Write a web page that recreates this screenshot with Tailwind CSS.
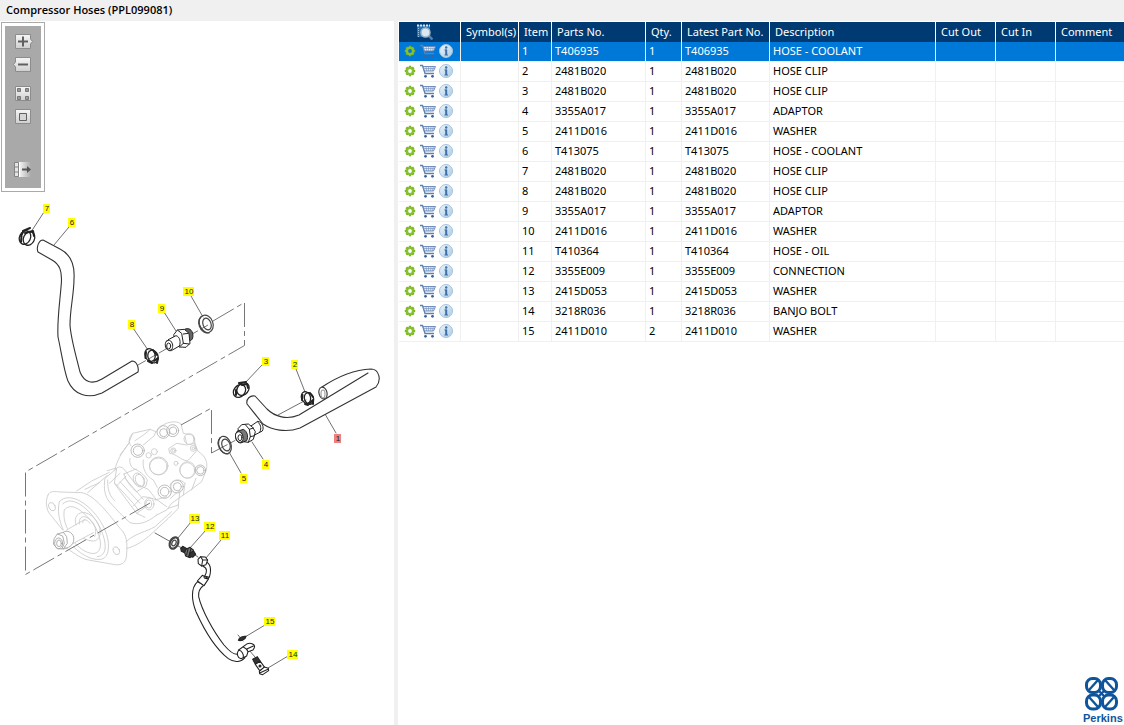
<!DOCTYPE html>
<html lang="en">
<head>
    <meta charset="UTF-8">
    <meta name="viewport" content="width=device-width, initial-scale=1.0">
    <title>Compressor Hoses (PPL099081)</title>
    <script src="https://cdn.jsdelivr.net/npm/@tailwindcss/browser@4"></script>
</head>
<body class="min-h-screen flex flex-col bg-white text-black text-[11px] font-['Noto_Sans','Open_Sans',sans-serif]">

    <!-- Shared icons -->
    <svg class="absolute w-0 h-0" aria-hidden="true">
        <defs>
            <linearGradient id="btnFill" x1="0" y1="0" x2="0" y2="1">
                <stop offset="0" stop-color="#f6f6f6"/>
                <stop offset="1" stop-color="#cfcfcf"/>
            </linearGradient>
            <linearGradient id="fadeFill" x1="0" y1="0" x2="1" y2="0">
                <stop offset="0" stop-color="#f0f0f0"/>
                <stop offset="1" stop-color="#a9a9a9"/>
            </linearGradient>
            <linearGradient id="infoFill" x1="0" y1="0" x2="1" y2="1">
                <stop offset="0" stop-color="#eef5fb"/>
                <stop offset="1" stop-color="#a9cbe6"/>
            </linearGradient>
        </defs>
        <symbol id="gear" viewBox="0 0 12 12">
            <path d="M6 .8v10.400M.8 6h10.400M2.300 2.300l7.400 7.400M9.700 2.300l-7.400 7.400" stroke="#79b51c" stroke-width="2.400"/>
            <circle cx="6" cy="6" r="3" fill="none" stroke="#86bf2f" stroke-width="2.400"/>
            <circle cx="6" cy="6" r="1.900" fill="currentColor"/>
        </symbol>
        <symbol id="cart" viewBox="0 0 16 14">
            <path d="M0 1.500h2.500L5 9.500h9" fill="none" stroke="#5b80b2" stroke-width="1.300"/>
            <path d="M3 2.500h12.500l-2 4.500H4.500z" fill="#e4ecf6" stroke="#6285b5" stroke-width=".9"/>
            <path d="M3.500 4.500h11.500M6 2.500l.8 4.500M8.500 2.500v4.500M11 2.500l-.4 4.500M13.400 2.500l-1 4.500" stroke="#7391bb" stroke-width=".6" fill="none"/>
            <circle cx="5.500" cy="12.300" r="1.400" fill="#3f6298"/>
            <circle cx="12.500" cy="12.300" r="1.400" fill="#3f6298"/>
        </symbol>
        <symbol id="info" viewBox="0 0 14 14">
            <circle cx="7" cy="7" r="6.500" fill="url(#infoFill)" stroke="#a3c3df"/>
            <path d="M7.200 5.500v5.500" fill="none" stroke="#3f6fa5" stroke-width="2"/>
            <path d="M5.500 6h2M5.500 11h3.500" fill="none" stroke="#3f6fa5" stroke-width="1"/>
            <circle cx="7.200" cy="3.500" r="1.200" fill="#3f6fa5"/>
        </symbol>
    </svg>

    <header class="h-[21px] shrink-0 bg-[#f0f0f0] px-1.5 flex items-center">
        <h1 class="font-semibold font-['Open_Sans','Noto_Sans',sans-serif]">Compressor Hoses (PPL099081)</h1>
    </header>

    <main class="flex-1 flex">
        <!-- Exploded view -->
        <section class="relative w-[398px] shrink-0 border-r-4 border-[#f0f0f0]">
            <svg class="block w-full" viewBox="0 21 394 704" fill="none" stroke-linejoin="round" stroke-linecap="round">
                <!-- Pump body -->
                <g transform="translate(20 400) scale(.33333)" stroke="#cbcbcb" stroke-width="2.600">
                    <path d="M84 285C88 272 105 274 120 276L185 278C225 285 268 345 300 385C322 405 322 430 320 462C320 485 308 497 285 494L205 480C180 476 150 450 133 440M84 285C76 300 78 325 88 340L128 390"/>
                    <path d="M118 305C150 270 215 315 248 375C275 425 270 480 238 478C220 480 190 470 160 440M118 305C112 330 116 360 130 390"/>
                    <path d="M128 312C155 283 210 325 240 382C262 430 262 468 232 470M133 330C155 300 200 340 228 385C248 425 245 455 225 460C205 463 185 450 165 430M133 330C130 345 132 365 142 385"/>
                    <path d="M168 375C160 350 175 335 195 338C225 345 245 380 240 405C232 430 212 425 190 415M178 372C176 355 185 346 200 352C225 365 232 390 224 410M188 368C188 358 200 355 210 370"/>
                    <ellipse cx="96" cy="320" rx="9" ry="13" transform="rotate(-25 96 320)"/>
                    <ellipse cx="289" cy="452" rx="9" ry="12" transform="rotate(-25 289 452)"/>
                    <path d="M140 390L195 358M160 430L220 398M170 273L215 243L268 217M195 268L238 248M203 278L262 226M262 212L285 205"/>
                    <path d="M320 445C345 440 365 425 385 410L445 355L475 325V312M318 425C345 400 380 395 405 380L455 335"/>
                    <!-- end cover -->
                    <path d="M285 210C290 180 305 160 325 132L338 100L390 88L408 95L425 78C440 66 470 60 483 72L490 100L515 105C530 115 520 130 528 148L548 165C562 180 565 200 553 225L545 245L512 270L490 285L455 310L440 330L410 345"/>
                    <path d="M338 100C325 115 325 125 333 138M390 88C380 100 360 112 345 122M408 95L402 108L370 135M300 165L325 132M285 210C290 200 300 198 310 205L345 250L385 268L410 300"/>
                    <path d="M285 210L255 235C250 265 255 290 268 305L300 340L330 368C355 375 380 370 410 345M263 240C262 270 270 290 285 303M268 250L300 220M290 258L318 228M285 250L340 310L355 330M300 245L360 310M315 235L370 298"/>
                    <path d="M290 205L283 250L335 320M335 320L350 340L375 352M340 318L368 290L385 292L412 300L440 320M350 340L378 320"/>
                    <path d="M312 222L345 208C355 212 372 222 382 240L378 258L350 275C335 265 320 245 312 222Z"/>
                    <ellipse cx="356" cy="240" rx="15" ry="22" transform="rotate(-25 356 240)"/>
                    <ellipse cx="360" cy="241" rx="13" ry="19" transform="rotate(-25 360 241)"/>
                    <ellipse cx="388" cy="312" rx="14" ry="18"/>
                    <ellipse cx="386" cy="312" rx="9" ry="12"/>
                    <!-- ports and bolts -->
                    <ellipse cx="416" cy="198" rx="28" ry="27"/>
                    <ellipse cx="415" cy="199" rx="26" ry="25"/>
                    <ellipse cx="503" cy="210" rx="24" ry="25"/>
                    <ellipse cx="502" cy="211" rx="22" ry="23"/>
                    <path d="M447 145L470 130L500 135L525 130L532 150L510 175C495 195 480 165 450 160Z"/>
                    <circle cx="460" cy="152" r="8"/><circle cx="460" cy="152" r="4"/>
                    <circle cx="520" cy="145" r="9"/><circle cx="520" cy="145" r="4"/>
                    <circle cx="386" cy="166" r="8"/><circle cx="403" cy="155" r="9"/><circle cx="468" cy="190" r="6"/>
                    <circle cx="508" cy="117" r="16"/><path d="M495 110L500 130M520 108L522 125"/>
                    <g stroke="#b2b2b2">
                        <circle cx="353" cy="152" r="20"/><circle cx="354" cy="152" r="14"/>
                        <circle cx="430" cy="96" r="19"/><circle cx="431" cy="98" r="12"/>
                        <circle cx="458" cy="92" r="18"/><circle cx="459" cy="92" r="11"/>
                        <circle cx="434" cy="275" r="20"/><circle cx="434" cy="275" r="13"/>
                        <circle cx="471" cy="260" r="19"/><circle cx="472" cy="260" r="12"/>
                        <circle cx="541" cy="211" r="16"/><circle cx="541" cy="211" r="11"/>
                    </g>
                    <path d="M370 180C365 205 380 230 400 240L412 262M450 255C460 235 480 235 495 250M330 175C325 195 340 210 350 208M528 235L515 270M450 296L480 270L475 315L445 325M405 300L440 290M495 250L490 285"/>
                    <!-- shaft nut -->
                    <g stroke="#a3a3a3">
                        <ellipse cx="116" cy="430" rx="12" ry="16"/>
                        <ellipse cx="117" cy="430" rx="7" ry="10"/>
                        <path d="M103 415L112 402L130 397L140 410L142 430L130 447L112 446L101 433Z"/>
                        <path d="M130 397C140 388 158 397 161 412C163 430 155 442 130 447M112 402L128 408L133 430L126 446"/>
                    </g>
                </g>

                <!-- Centre lines -->
                <g stroke="#777" stroke-width="1" stroke-dasharray="24 4 5 4" stroke-linecap="butt">
                    <path d="M213 321L244.500 302.500V345.500L25.500 472V574.500L150 503"/>
                    <path d="M181 425L211.500 408V453L236 440"/>
                    <path d="M138 365L208 325" stroke-dasharray="9 3"/>
                </g>
                <g stroke="#6e6e6e" stroke-width="1">
                    <path d="M278 415L306 400M155 533L171 542M178 546L184 549M192 553L198 557M238 635L243 641M249 650L255 657"/>
                </g>

                <!-- Leaders -->
                <g stroke="#707070" stroke-width="1">
                    <path d="M44 212L31 232M69 227L54 245M133 328L148 350M164 312L176 331M191 296L203 317M262 365L245 383M296 369L305 392M336 433L325 414M263 459L252 442M241 473L229 452M191 522L178 538M206 530L190 548M221 540L206 558M265 625L245 637M288 656L268 668"/>
                </g>

                <!-- Hoses 6 and 1 -->
                <g stroke="#333" stroke-width="1.100" fill="#fff">
                    <path d="M43 240L60 249C70 254 75 264 74 279C74 294 70 309 70 325C71 340 77 359 80 372C84 382 92 385 102 379L132 361C137 361 139 368 138 372L102 393C88 399 74 395 68 381C64 371 61 350 58 337C57 320 60 301 61 287C63 270 59 264 52 260L38 252C36 247 39 240 43 240Z"/>
                    <path d="M322 387C334 379 350 370 371 369C379 369 382 380 376 387L300 428C286 433 272 430 263 424L247 404C246 399 250 395 255 396L267 409C275 417 287 420 299 415L326 399Z" stroke="none"/>
                    <path d="M322 387C334 379 350 370 371 369C379 369 382 380 376 387L300 428C286 433 272 430 263 424L247 404C246 399 250 395 255 396L267 409C275 417 287 420 299 415L368 373" fill="none"/>
                    <ellipse cx="323" cy="393" rx="4" ry="6" transform="rotate(-15 323 393)"/>
                    <ellipse cx="323" cy="394" rx="2" ry="4" stroke="#999"/>
                </g>

                <!-- Hose clips 7, 8, 3, 2 -->
                <g stroke="#222">
                    <g stroke-width="1.300">
                        <ellipse cx="25" cy="237.500" rx="5.500" ry="7" transform="rotate(25 25 237.500)"/>
                        <ellipse cx="29" cy="238.500" rx="5.500" ry="7" transform="rotate(25 29 238.500)"/>
                        <ellipse cx="150" cy="355" rx="5" ry="6.500" transform="rotate(-20 150 355)"/>
                        <ellipse cx="153" cy="356.500" rx="5" ry="6.500" transform="rotate(-20 153 356.500)"/>
                        <ellipse cx="239.500" cy="391" rx="5.500" ry="7" transform="rotate(40 239.500 391)"/>
                        <ellipse cx="243" cy="389" rx="5.500" ry="7" transform="rotate(40 243 389)"/>
                        <ellipse cx="306" cy="397.500" rx="4.500" ry="6" transform="rotate(-20 306 397.500)"/>
                        <ellipse cx="309" cy="398.500" rx="4.500" ry="6" transform="rotate(-20 309 398.500)"/>
                    </g>
                    <path d="M21.500 236L21 242M23 232L21 236M146 352L145.500 358M236 390L236 395M302.500 395L302 400M148 361L152 363M305 404L308 405" stroke-width="2"/>
                    <path d="M23 231L30 228M25 233L33 231L34 236M153 350L157 355M154 361L158 358L157 363M239 383L246 382M242 385L247 384L248 388M310 393L313 397M309 404L313 400V404" stroke-width="2"/>
                </g>

                <!-- Adaptors 9 and 4 -->
                <g stroke="#222" stroke-width="3" fill="#fff" transform="translate(120 270) scale(.33333)">
                    <path d="M192 180C200 172 214 175 218 190C221 205 215 213 207 212L195 210Z" fill="#666"/>
                    <path d="M162 193L172 180L193 178L207 190L210 220L198 232L178 231L166 220Z"/>
                    <path d="M172 180L185 190L190 220L178 231M190 192L205 190M190 220L208 222"/>
                    <path d="M145 209L168 197C180 200 183 217 178 228L154 242C140 245 130 225 145 209Z"/>
                    <ellipse cx="147" cy="226" rx="11" ry="15" transform="rotate(-15 147 226)"/>
                    <ellipse cx="146" cy="228" rx="6" ry="9"/>
                    <path d="M393 468L413 454C427 456 433 472 427 483L400 497Z"/>
                    <path d="M413 456C422 462 425 474 420 485" fill="none"/>
                    <path d="M355 475L365 464L385 462L398 472L406 485L400 508L385 517L370 515L358 500Z"/>
                    <path d="M375 463L388 478L391 500L385 517M388 478L400 474M391 500L404 497"/>
                    <path d="M352 484L370 478C382 484 386 500 380 512L362 519C347 518 341 495 352 484Z" fill="#777"/>
                    <ellipse cx="358" cy="501" rx="11" ry="16" transform="rotate(-15 358 501)"/>
                    <ellipse cx="360" cy="503" rx="6" ry="9"/>
                </g>

                <!-- Washers 10, 5, 13 -->
                <g stroke="#444" stroke-width="1.200">
                    <ellipse cx="206" cy="324" rx="7" ry="9" transform="rotate(-20 206 324)"/>
                    <ellipse cx="207" cy="324" rx="4" ry="6" transform="rotate(-20 207 324)"/>
                    <path d="M201 317C196 322 202 333 209 333"/>
                    <ellipse cx="225" cy="445" rx="6" ry="9" transform="rotate(-20 225 445)"/>
                    <ellipse cx="226" cy="445" rx="4" ry="6" transform="rotate(-20 226 445)"/>
                    <path d="M220 438C215 444 221 454 228 454"/>
                    <ellipse cx="174" cy="543" rx="4" ry="6" stroke-width="2.200" transform="rotate(25 174 543)"/>
                    <ellipse cx="174" cy="543" rx="2" ry="3" transform="rotate(25 174 543)"/>
                </g>

                <!-- Connection 12, oil hose 11, washer 15, banjo bolt 14 -->
                <g stroke="#222" stroke-width="3.200" fill="#fff" transform="translate(130 500) scale(.33333)">
                    <path d="M152 145L158 139L172 147L167 160L154 154Z" fill="#333"/>
                    <path d="M168 148L180 142L190 150L191 164L180 173L167 168L164 158Z" fill="#777"/>
                    <path d="M180 158L191 153L197 163L188 172L178 168Z" fill="#333"/>
                    <path d="M174 147L170 165M183 146L176 170" fill="none"/>
                    <path d="M225 184C245 192 243 215 238 232L224 228C232 215 232 204 219 199Z"/>
                    <path d="M204 178L212 170L226 171L233 180L228 194L215 198L205 191Z"/>
                    <path d="M212 170L218 180L215 198M218 180L232 180" fill="none"/>
                    <path d="M203 245C180 265 186 305 198 335C225 395 262 450 295 476C315 490 335 485 345 473L325 461C315 467 300 456 282 435C250 395 215 330 206 290C204 275 210 264 222 255Z"/>
                    <path d="M202 243L217 226L236 236L222 257Z"/>
                    <path d="M222 231C222 236 232 238 235 233" fill="none"/>
                    <path d="M326 450L352 431C362 427 377 433 373 443L369 450L354 455L350 468L333 476C322 474 319 460 326 450Z"/>
                    <path d="M326 450C335 452 342 462 340 473M340 441C349 445 352 450 354 455M352 446L370 438" fill="none"/>
                    <path d="M325 421C327 413 341 407 348 409C347 417 334 424 325 421Z" fill="#333"/>
                    <path d="M368 478L382 470L391 484L376 493Z" fill="#333"/>
                    <path d="M376 493L391 484L404 502L389 512Z"/>
                    <path d="M388 514L403 501L415 505L416 512L398 524L389 521Z"/>
                    <path d="M389 519L414 508" fill="none"/>
                    <circle cx="390" cy="498" r="3" fill="#333"/>
                </g>

                <g id="callouts" class="text-[8px] font-['Liberation_Sans',Arial,sans-serif]"></g>
            </svg>

            <!-- Viewer toolbar -->
            <div class="absolute left-px top-px w-11 border border-[#aaa] bg-white p-[3px]">
                <div class="bg-[#a9a9a9] h-[162px] flex flex-col items-center pt-[7px]">
                    <button type="button" aria-label="Zoom in" class="h-[17px] mb-1.5">
                        <svg class="w-5 h-[17px]" viewBox="0 0 20 17"><path d="M2.500 1.500h15v4.500l2 2.500-2 2.500v4.500h-15z" fill="url(#btnFill)" stroke="#8c8c8c"/><path d="M10 3.500v10M5 8.500h10" stroke="#606060" stroke-width="2"/></svg>
                    </button>
                    <button type="button" aria-label="Zoom out" class="h-[17px] mb-3">
                        <svg class="w-5 h-[17px]" viewBox="0 0 20 17"><path d="M2.500 1.500h15v14h-15v-4.500l-2-2.500 2-2.500z" fill="url(#btnFill)" stroke="#8c8c8c"/><path d="M5 8.500h10" stroke="#606060" stroke-width="2"/></svg>
                    </button>
                    <button type="button" aria-label="Fit to window" class="h-[17px] mb-1.5">
                        <svg class="w-5 h-[17px]" viewBox="0 0 20 17"><path d="M2.500 1.500h15v14h-15z" fill="url(#btnFill)" stroke="#8c8c8c"/><path d="M4.500 3.500h3v3h-3zM12.500 3.500h3v3h-3zM4.500 11.500h3v3h-3zM12.500 11.500h3v3h-3z" fill="#999" stroke="#777"/></svg>
                    </button>
                    <button type="button" aria-label="Actual size" class="h-[17px] mb-9">
                        <svg class="w-5 h-[17px]" viewBox="0 0 20 17"><path d="M2.500 1.500h15v14h-15z" fill="url(#btnFill)" stroke="#8c8c8c"/><path d="M6.500 5.500h7v7h-7z" fill="#d6d6d6" stroke="#606060"/></svg>
                    </button>
                    <button type="button" aria-label="Detach panel" class="h-[17px]">
                        <svg class="w-5 h-[17px]" viewBox="0 0 20 17"><path d="M7 1h11v15H7z" fill="url(#fadeFill)"/><path d="M1.500 1.500h4v14h-4zM1.500 6h4M1.500 11h4" fill="#e6e6e6" stroke="#848484"/><path d="M6.500 1v15" stroke="#fff"/><path d="M9 8.500h5" stroke="#555" stroke-width="2"/><path d="M14 5l4 3.500-4 3.500z" fill="#555"/></svg>
                    </button>
                </div>
            </div>
        </section>

        <!-- Parts list -->
        <section class="flex-1 min-w-0 flex flex-col pl-px pt-px">
            <table class="w-full table-fixed border-separate border-spacing-0">
                <colgroup>
                    <col class="w-[62px]">
                    <col class="w-[58px]">
                    <col class="w-[33px]">
                    <col class="w-[94px]">
                    <col class="w-[36px]">
                    <col class="w-[88px]">
                    <col class="w-[166px]">
                    <col class="w-[60px]">
                    <col class="w-[60px]">
                    <col>
                </colgroup>
                <thead>
                    <tr class="h-5 bg-[#003a73] text-white text-left leading-4 whitespace-nowrap">
                        <th class="border-r border-white py-0 pr-0 pl-[18px]">
                            <button type="button" aria-label="Search parts" class="block">
                                <svg class="w-4 h-4" viewBox="0 0 16 16"><path d="M0 1h13v12H0z" fill="#1d73b5"/><path d="M0 1.500h13" stroke="#cfe4f4" stroke-width="2" stroke-dasharray="2 1"/><path d="M1.500 4v9" stroke="#9cc8e8" stroke-dasharray="1 1"/><path d="M11.500 11.500l4 4" stroke="#4d83b3" stroke-width="2.500"/><circle cx="8.500" cy="8.500" r="4.500" fill="#dbe8f2" stroke="#9eb6c9" stroke-width="1.500"/></svg>
                            </button>
                        </th>
                        <th class="border-r border-white font-normal py-0 pl-[5px]">Symbol(s)</th>
                        <th class="border-r border-white font-normal py-0 pl-[5px]">Item</th>
                        <th class="border-r border-white font-normal py-0 pl-[5px]">Parts No.</th>
                        <th class="border-r border-white font-normal py-0 pl-[5px]">Qty.</th>
                        <th class="border-r border-white font-normal py-0 pl-[5px]">Latest Part No.</th>
                        <th class="border-r border-white font-normal py-0 pl-[5px]">Description</th>
                        <th class="border-r border-white font-normal py-0 pl-[5px]">Cut Out</th>
                        <th class="border-r border-white font-normal py-0 pl-[5px]">Cut In</th>
                        <th class="font-normal py-0 pl-[5px]">Comment</th>
                    </tr>
                </thead>
                <tbody id="partsBody"></tbody>
            </table>

            <svg class="mt-auto ml-auto mr-px w-10 h-[50px] shrink-0" viewBox="0 0 40 50" role="img" aria-label="Perkins">
                <g fill="none" stroke="#0f559c" stroke-width="3">
                    <rect x="3.500" y="3.500" width="14" height="14" rx="6"/>
                    <rect x="19.500" y="3.500" width="14" height="14" rx="6"/>
                    <rect x="3.500" y="20" width="14" height="14" rx="6"/>
                    <rect x="19.500" y="20" width="14" height="14" rx="6"/>
                    <path d="M6 15l9-10M22 5l9 10M6 22l9 10M31 22l-9 10" stroke-width="2.400"/>
                    <path d="M15 15l7 7M22 15l-7 7" stroke-width="2.400"/>
                </g>
                <text x="0" y="47" fill="#0f559c" class="text-[11px] font-bold font-['Liberation_Sans',Arial,sans-serif]">Perkins</text>
            </svg>
        </section>
    </main>

    <script>
        // item, part number, quantity, description
        const parts = [
            [1, 'T406935', 1, 'HOSE - COOLANT'],
            [2, '2481B020', 1, 'HOSE CLIP'],
            [3, '2481B020', 1, 'HOSE CLIP'],
            [4, '3355A017', 1, 'ADAPTOR'],
            [5, '2411D016', 1, 'WASHER'],
            [6, 'T413075', 1, 'HOSE - COOLANT'],
            [7, '2481B020', 1, 'HOSE CLIP'],
            [8, '2481B020', 1, 'HOSE CLIP'],
            [9, '3355A017', 1, 'ADAPTOR'],
            [10, '2411D016', 1, 'WASHER'],
            [11, 'T410364', 1, 'HOSE - OIL'],
            [12, '3355E009', 1, 'CONNECTION'],
            [13, '2415D053', 1, 'WASHER'],
            [14, '3218R036', 1, 'BANJO BOLT'],
            [15, '2411D010', 2, 'WASHER']
        ];
        const selectedItem = 1;

        // item, centre x, centre y
        const callouts = [
            [1, 338, 438], [2, 295, 364], [3, 266, 361], [4, 266, 464], [5, 244, 478],
            [6, 72, 222], [7, 47, 208], [8, 132, 324], [9, 162, 308], [10, 189, 291],
            [11, 225, 535], [12, 210, 526], [13, 195, 518], [14, 293, 654], [15, 270, 621]
        ];

        const cell = 'border-r border-b border-[#f0f0f0] pt-0 pb-0.5 px-[3px]';

        document.getElementById('partsBody').innerHTML = parts.map(([item, partNo, qty, description]) => `
            <tr class="${item === selectedItem ? 'h-5 leading-4 bg-[#0078d7] text-white' : 'h-5 leading-4'}">
                <td class="border-r border-b border-[#f0f0f0] pt-0 pb-0.5 pl-[5px]">
                    <div class="flex items-center">
                        <button type="button" aria-label="Options" class="${item === selectedItem ? 'text-[#0078d7]' : 'text-white'}"><svg class="w-3 h-3"><use href="#gear"/></svg></button>
                        <button type="button" aria-label="Add to cart" class="ml-1"><svg class="w-4 h-3.5"><use href="#cart"/></svg></button>
                        <button type="button" aria-label="Part info" class="ml-[3px]"><svg class="w-3.5 h-3.5"><use href="#info"/></svg></button>
                    </div>
                </td>
                <td class="${cell}"></td>
                <td class="${cell}">${item}</td>
                <td class="${cell}">${partNo}</td>
                <td class="${cell}">${qty}</td>
                <td class="${cell}">${partNo}</td>
                <td class="${cell}">${description}</td>
                <td class="${cell}"></td>
                <td class="${cell}"></td>
                <td class="border-b border-[#f0f0f0] p-0"></td>
            </tr>`).join('');

        document.getElementById('callouts').innerHTML = callouts.map(([item, x, y]) => {
            const w = item > 9 ? 10 : 6;
            return `<rect x="${x - w / 2 - 1}" y="${y - 4}" width="${w + 1}" height="9" fill="${item === selectedItem ? '#f08080' : '#ffff00'}"/>
                <text x="${x}" y="${y + 3}" text-anchor="middle" fill="#222">${item}</text>`;
        }).join('');
    </script>
</body>
</html>
